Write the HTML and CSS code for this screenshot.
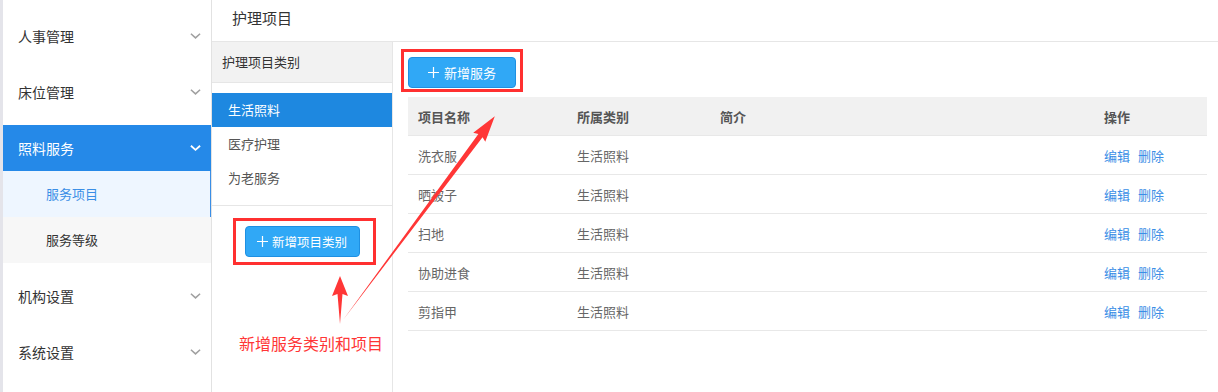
FILE: index.html
```html
<!DOCTYPE html>
<html lang="zh-CN">
<head>
  <meta charset="UTF-8">
  <title>护理项目</title>
  <link rel="stylesheet" href="styles.css">
</head>
<body>
  <div class="app">
    <div class="sidebar">
      <div class="menu-item">人事管理<svg class="chev" viewBox="0 0 12 8"><path d="M1 1.5l5 4.5 5-4.5"/></svg></div>
      <div class="menu-item">床位管理<svg class="chev" viewBox="0 0 12 8"><path d="M1 1.5l5 4.5 5-4.5"/></svg></div>
      <div class="menu-group">
        <div class="menu-head">照料服务<svg class="chev" viewBox="0 0 12 8"><path d="M1 1.5l5 4.5 5-4.5"/></svg></div>
        <div class="sub-item active">服务项目</div>
        <div class="sub-item">服务等级</div>
      </div>
      <div class="menu-item">机构设置<svg class="chev" viewBox="0 0 12 8"><path d="M1 1.5l5 4.5 5-4.5"/></svg></div>
      <div class="menu-item">系统设置<svg class="chev" viewBox="0 0 12 8"><path d="M1 1.5l5 4.5 5-4.5"/></svg></div>
    </div>

    <div class="main">
      <div class="page-title">护理项目</div>
      <div class="content">
        <div class="category">
          <div class="category-head">护理项目类别</div>
          <div class="category-list">
            <div class="category-item active">生活照料</div>
            <div class="category-item">医疗护理</div>
            <div class="category-item">为老服务</div>
          </div>
          <div class="category-foot">
            <button class="btn"><svg class="plus" viewBox="0 0 11 11"><path d="M5.5 0v11M0 5.5h11"/></svg>新增项目类别</button>
          </div>
        </div>

        <div class="panel">
          <div class="toolbar">
            <button class="btn"><svg class="plus" viewBox="0 0 11 11"><path d="M5.5 0v11M0 5.5h11"/></svg>新增服务</button>
          </div>
          <table class="grid">
            <thead>
              <tr><th class="c1">项目名称</th><th class="c2">所属类别</th><th class="c3">简介</th><th class="c4">操作</th></tr>
            </thead>
            <tbody>
              <tr><td>洗衣服</td><td>生活照料</td><td></td><td><a>编辑</a><a>删除</a></td></tr>
              <tr><td>晒被子</td><td>生活照料</td><td></td><td><a>编辑</a><a>删除</a></td></tr>
              <tr><td>扫地</td><td>生活照料</td><td></td><td><a>编辑</a><a>删除</a></td></tr>
              <tr><td>协助进食</td><td>生活照料</td><td></td><td><a>编辑</a><a>删除</a></td></tr>
              <tr><td>剪指甲</td><td>生活照料</td><td></td><td><a>编辑</a><a>删除</a></td></tr>
            </tbody>
          </table>
        </div>
      </div>
    </div>
  </div>

  <!-- annotation overlay -->
  <div class="mark mark-service"></div>
  <div class="mark mark-category"></div>
  <div class="note">新增服务类别和项目</div>
  <svg class="arrows" width="1218" height="392" viewBox="0 0 1218 392">
    <polygon fill="#ff3636" transform="translate(343 320) rotate(-53.3)" points="0,0 230,-2.6 228,-7.5 254,0 228,7.5 230,2.6"/>
    <polygon fill="#ff3636" transform="translate(340 324) rotate(-90)" points="0,0 30,-2.5 28,-8 48,0 28,8 30,2.5"/>
  </svg>
</body>
</html>
```

FILE: styles.css
```css
body {
  margin: 0;
  font-family: "Noto Sans CJK SC", "Liberation Sans", sans-serif;
  color: #333;
  background: #fff;
}
.app {
  display: flex;
  height: 392px;
  overflow: hidden;
}

/* sidebar */
.sidebar {
  width: 208px;
  flex-shrink: 0;
  border-left: 3px solid #e4e4ea;
  border-right: 1px solid #e2e2e2;
  padding-top: 8px;
  font-size: 14px;
}
.menu-item, .menu-head {
  display: flex;
  align-items: center;
  justify-content: space-between;
  height: 56px;
  padding: 0 10px 0 15px;
}
.menu-group {
  margin: 5px 0;
}
.menu-head {
  height: 46px;
  background: #2589e8;
  color: #fff;
}
.chev {
  width: 11px;
  height: 8px;
  fill: none;
  stroke: #a0a0a0;
  stroke-width: 1.7;
}
.menu-head .chev {
  stroke: #fff;
  stroke-width: 2;
}
.sub-item {
  height: 46px;
  line-height: 46px;
  padding-left: 43px;
  font-size: 13px;
  background: #f7f7f7;
}
.sub-item.active {
  background: #eef6ff;
  color: #3a8ee6;
  border-right: 1px solid #3a8ee6;
}

/* main */
.main {
  flex: 1;
  display: flex;
  flex-direction: column;
}
.page-title {
  height: 41px;
  line-height: 36px;
  padding-left: 20px;
  font-size: 15px;
  border-bottom: 1px solid #e6e6e6;
}
.content {
  flex: 1;
  display: flex;
}
.category {
  width: 180px;
  flex-shrink: 0;
  border-right: 1px solid #e6e6e6;
  font-size: 13px;
}
.category-head {
  height: 40px;
  line-height: 40px;
  padding-left: 10px;
  background: #f2f2f2;
  border-bottom: 1px solid #e6e6e6;
}
.category-list {
  padding: 10px 0;
  border-bottom: 1px solid #e6e6e6;
}
.category-item {
  height: 34px;
  line-height: 34px;
  padding-left: 16px;
  color: #555;
}
.category-item.active {
  background: #1e88e0;
  color: #fff;
}
.category-foot {
  display: flex;
  justify-content: center;
  padding-top: 20px;
}
.btn {
  display: flex;
  align-items: center;
  justify-content: center;
  gap: 5px;
  height: 31px;
  padding: 0;
  font-family: inherit;
  font-size: 13px;
  color: #fff;
  background: #30a8f6;
  border: 1px solid #1e90e2;
  border-radius: 4px;
}
.plus {
  width: 11px;
  height: 11px;
  stroke: #fff;
  stroke-width: 1.2;
}
.category .btn {
  width: 115px;
  gap: 4px;
  font-size: 12.5px;
}
.toolbar .btn {
  width: 108px;
}

.panel {
  flex: 1;
  padding: 15px 11px 0 15px;
}
.toolbar {
  margin-bottom: 9px;
}
.grid {
  width: 799px;
  border-collapse: collapse;
  font-size: 13px;
}
.grid th, .grid td {
  height: 38px;
  padding: 0 10px;
  text-align: left;
  border-bottom: 1px solid #e8e8e8;
}
.grid th {
  background: #f1f1f1;
  color: #555;
  font-weight: bold;
}
.grid td {
  color: #666;
}
.c1 { width: 139px; }
.c2 { width: 123px; }
.c3 { width: 364px; }
.grid a {
  color: #3a8ee6;
  margin-right: 8px;
}

/* annotations */
.mark {
  position: absolute;
  border: 3px solid #ff3030;
}
.mark-service {
  left: 401px;
  top: 49px;
  width: 116px;
  height: 37px;
}
.mark-category {
  left: 233px;
  top: 218px;
  width: 137px;
  height: 41px;
}
.note {
  position: absolute;
  left: 239px;
  top: 331px;
  font-size: 16px;
  color: #ff3636;
}
.arrows {
  position: absolute;
  left: 0;
  top: 0;
  pointer-events: none;
}
```
